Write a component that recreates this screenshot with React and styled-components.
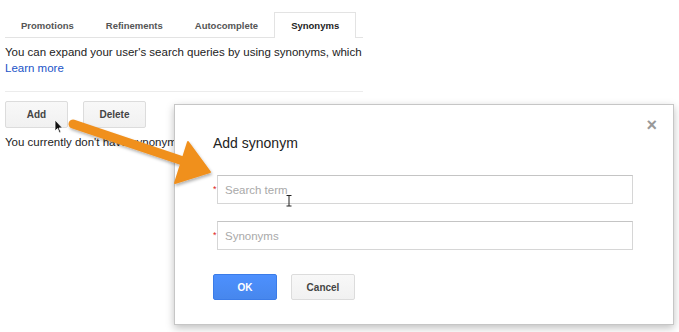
import React from "react";
import styled, { createGlobalStyle } from "styled-components";

const Global = createGlobalStyle`
  html, body {
    margin: 0;
    padding: 0;
    background: #fff;
    font-family: "Liberation Sans", Arial, sans-serif;
    color: #222;
  }
`;

const Page = styled.div`
  position: relative;
  width: 679px;
  height: 332px;
  overflow: hidden;
`;

const Column = styled.div`
  width: 358px;
  padding: 12px 0 0 5px;
`;

const Tabs = styled.div`
  display: flex;
  height: 25px;
  border-bottom: 1px solid #e3e3e3;
`;

const Tab = styled.div`
  box-sizing: border-box;
  height: ${({ active }) => (active ? "26px" : "25px")};
  padding: 0 ${({ pad }) => pad}px;
  display: flex;
  align-items: center;
  font-size: 9.5px;
  font-weight: bold;
  color: ${({ active }) => (active ? "#222" : "#555")};
  background: #fff;
  border: 1px solid ${({ active }) => (active ? "#e3e3e3" : "transparent")};
  border-bottom: none;
`;

const Intro = styled.p`
  margin: 6px 0 0;
  font-size: 11.5px;
  line-height: 16px;
  white-space: nowrap;
  overflow: hidden;
`;

const Link = styled.a`
  color: #1a55c8;
  text-decoration: none;
`;

const Rule = styled.div`
  height: 1px;
  background: #ececec;
  margin-top: 15px;
`;

const Actions = styled.div`
  display: flex;
  gap: 15px;
  margin-top: 9px;
`;

const Button = styled.button`
  box-sizing: border-box;
  width: ${({ w }) => w || 63}px;
  height: ${({ h }) => h || 27}px;
  font-family: "Liberation Sans", Arial, sans-serif;
  font-size: 10px;
  font-weight: bold;
  border-radius: 2px;
  padding: 0;
  color: ${({ primary }) => (primary ? "#fff" : "#444")};
  background: ${({ primary }) =>
    primary ? "linear-gradient(#4d90fe, #4787ed)" : "linear-gradient(#f8f8f8, #f1f1f1)"};
  border: 1px solid ${({ primary }) => (primary ? "#3b7ce8" : "#dcdcdc")};
`;

const Empty = styled.p`
  margin: 6px 0 0;
  font-size: 11.5px;
  line-height: 16px;
  white-space: nowrap;
`;

const Dialog = styled.div`
  position: absolute;
  left: 174px;
  top: 104px;
  width: 500px;
  height: 221px;
  box-sizing: border-box;
  background: #fff;
  border: 1px solid #c6c6c6;
  box-shadow: 0 3px 8px rgba(0, 0, 0, 0.25);
  padding: 27px 40px 0 38px;
`;

const Close = styled.div`
  position: absolute;
  right: 16px;
  top: 12px;
  font-size: 18px;
  color: #999;
  font-weight: bold;
  line-height: 16px;
`;

const Title = styled.h2`
  margin: 0;
  font-size: 14px;
  font-weight: normal;
  line-height: 22px;
  color: #222;
`;

const Fields = styled.div`
  display: flex;
  flex-direction: column;
  gap: 17px;
  margin-top: 21px;
`;

const Field = styled.div`
  display: flex;
  align-items: center;
`;

const Star = styled.span`
  width: 4px;
  color: #dd2222;
  font-size: 9px;
  margin-bottom: 2px;
`;

const Input = styled.input`
  box-sizing: border-box;
  width: 418px;
  height: 29px;
  border: 1px solid #d6d6d6;
  border-top-color: #c4c4c4;
  padding: 0 7px;
  font-family: "Liberation Sans", Arial, sans-serif;
  font-size: 11.5px;
  outline: none;
  &::placeholder {
    color: #a9a9a9;
  }
`;

const Footer = styled.div`
  display: flex;
  gap: 14px;
  margin-top: 24px;
`;

const Overlay = styled.svg`
  position: absolute;
  left: 0;
  top: 0;
  pointer-events: none;
`;

export default function App() {
  return (
    <Page>
      <Global />
      <Column>
        <Tabs>
          <Tab pad={15}>Promotions</Tab>
          <Tab pad={15}>Refinements</Tab>
          <Tab pad={15}>Autocomplete</Tab>
          <Tab pad={16} active>Synonyms</Tab>
        </Tabs>
        <Intro>
          You can expand your user's search queries by using synonyms, which
          let you
          <br />
          <Link href="#">Learn more</Link>
        </Intro>
        <Rule />
        <Actions>
          <Button>Add</Button>
          <Button>Delete</Button>
        </Actions>
        <Empty>You currently don't have synonyms defined.</Empty>
      </Column>

      <Dialog>
        <Close>×</Close>
        <Title>Add synonym</Title>
        <Fields>
          <Field>
            <Star>*</Star>
            <Input placeholder="Search term" />
          </Field>
          <Field>
            <Star>*</Star>
            <Input placeholder="Synonyms" />
          </Field>
        </Fields>
        <Footer>
          <Button primary w={64} h={26}>OK</Button>
          <Button w={64} h={26}>Cancel</Button>
        </Footer>
      </Dialog>

      <Overlay width="679" height="332" viewBox="0 0 679 332">
        <defs>
          <filter id="sh" x="-20%" y="-20%" width="140%" height="140%">
            <feDropShadow dx="1" dy="2" stdDeviation="1.5" floodColor="#000" floodOpacity="0.3" />
          </filter>
        </defs>
        <g filter="url(#sh)">
          <line x1="73" y1="124" x2="186" y2="162" stroke="#f0901f" strokeWidth="9" strokeLinecap="round" />
          <polygon points="210,172 188,142 175,183" fill="#f0901f" strokeLinejoin="round" stroke="#f0901f" strokeWidth="2" />
        </g>
        <path
          d="M55 120 L55 131 L57.5 128.5 L59.5 133 L61 132.3 L59 128 L62.5 128 Z"
          fill="#111"
          stroke="#fff"
          strokeWidth="0.8"
        />
        <path
          d="M286.5 195.5 H291.5 M289 195.5 V206 M286.5 206 H291.5"
          stroke="#222"
          strokeWidth="1"
          fill="none"
        />
      </Overlay>
    </Page>
  );
}
